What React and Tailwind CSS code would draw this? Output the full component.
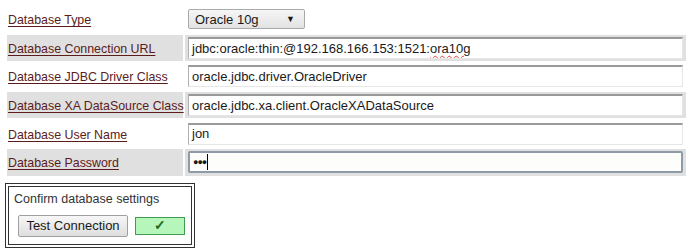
import React from "react";

const font = { fontFamily: '"Liberation Sans", Arial, sans-serif' };

function Label({ children }) {
  return (
    <span className="whitespace-nowrap text-[12.4px] text-[#5a1c1c] underline underline-offset-2 decoration-[#5a1c1c]">
      {children}
    </span>
  );
}

function FakeInput({ children, focused }) {
  return (
    <div
      className={
        "mx-[3px] h-[22px] flex items-center pl-[3px] text-[13px] text-[#1a1a1a] whitespace-nowrap overflow-hidden " +
        (focused
          ? "border-2 border-[#8d9aa8] rounded-[2px] bg-[#fdfdfb]"
          : "bg-white border-t-2 border-t-[#9a9a9a] border-l border-l-[#b0b0b0] border-r border-r-[#e6e6e6] border-b border-b-[#e6e6e6]")
      }
    >
      {children}
    </div>
  );
}

export default function App() {
  const rows = [
    { label: "Database Connection URL", grey: true, value: (
      <>
        jdbc:oracle:thin:@192.168.166.153:1521:
        <span className="underline decoration-wavy decoration-[#e04040] decoration-1 underline-offset-2">ora10g</span>
      </>
    ) },
    { label: "Database JDBC Driver Class", grey: false, value: "oracle.jdbc.driver.OracleDriver" },
    { label: "Database XA DataSource Class", grey: true, value: "oracle.jdbc.xa.client.OracleXADataSource" },
    { label: "Database User Name", grey: false, value: "jon" },
    { label: "Database Password", grey: true, focused: true, value: (
      <>
        <span className="text-[9px] tracking-[-1px] leading-none">●●●</span>
        <span className="inline-block w-px h-[16px] bg-black ml-[1px]" />
      </>
    ) },
  ];

  return (
    <div className="w-[693px] h-[252px] bg-white relative overflow-hidden" style={font}>
      <table className="ml-[5px] mt-[4px] border-separate border-spacing-[2px] w-[683px] table-fixed">
        <colgroup>
          <col className="w-[176px]" />
          <col />
        </colgroup>
        <tbody>
          <tr>
            <td className="h-[26.6px] p-0 pl-[1px] align-middle">
              <Label>Database Type</Label>
            </td>
            <td className="h-[26.6px] p-0 align-middle">
              <div className="ml-[3px] w-[117px] h-[20px] flex items-center justify-between pl-[6px] pr-[9px] border border-[#a9a9a9] rounded-[2px] bg-gradient-to-b from-[#f6f6f6] to-[#e2e2e2] text-[13px] text-[#1a1a1a]">
                <span>Oracle 10g</span>
                <span className="text-[9px]">▼</span>
              </div>
            </td>
          </tr>
          {rows.map((r) => (
            <tr key={r.label}>
              <td className={"h-[26.6px] p-0 pl-[1px] align-middle " + (r.grey ? "bg-[#e0e0e0]" : "")}>
                <Label>{r.label}</Label>
              </td>
              <td className={"h-[26.6px] p-0 align-middle " + (r.grey ? "bg-[#e0e0e0]" : "")}>
                <FakeInput focused={r.focused}>{r.value}</FakeInput>
              </td>
            </tr>
          ))}
        </tbody>
      </table>
      <div className="ml-[5px] mt-[5px] w-[190px] h-[65px] border-4 border-double border-[#333] pl-[5px] pt-[5px]">
        <div className="text-[12.5px] text-[#333] leading-[14px] whitespace-nowrap">Confirm database settings</div>
        <div className="flex items-center mt-[9px] ml-[4px] gap-[7px]">
          <div className="w-[110px] h-[22px] flex items-center justify-center border border-[#a0a0a0] rounded-[2px] bg-gradient-to-b from-[#f7f7f7] to-[#dedede] text-[13px] text-[#1a1a1a]">
            Test Connection
          </div>
          <div className="w-[50px] h-[18px] flex items-center justify-center border border-[#3f9c4f] bg-[#b6f6bb] text-[14px] font-bold text-[#1f6b22]">
            ✓
          </div>
        </div>
      </div>
    </div>
  );
}
